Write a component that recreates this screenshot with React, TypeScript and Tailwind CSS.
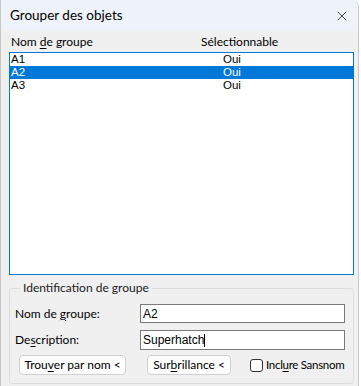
import { X } from "lucide-react";

const rows = [
  { name: "A1", sel: "Oui" },
  { name: "A2", sel: "Oui" },
  { name: "A3", sel: "Oui" },
];

const ui = "font-['Lato','Liberation_Sans',sans-serif]";
const arial = "font-['Liberation_Sans',Arial,sans-serif]";

export default function App() {
  const selected = 1;

  return (
    <div className={`w-[361px] h-[386px] bg-white ${ui} text-[12px] text-black whitespace-nowrap`}>
      <div className="w-[359px] h-full bg-[#f0f0f0] border-l border-r border-[#c8c8c8] rounded-tr-[7px] overflow-hidden">
        {/* Title bar */}
        <div className="h-[31px] flex items-center justify-between bg-[#eef3f9] pl-[9px] pr-[8px]">
          <span className="text-[13.5px] leading-none">Grouper des objets</span>
          <X size={16} strokeWidth={1.2} className="text-[#1a1a1a]" />
        </div>

        <div className="w-[345px] ml-[8px]">
          {/* Column headers */}
          <div className="h-[21px] flex items-center leading-none">
            <span className="w-[192px] pl-[2px]">
              Nom <span className="underline underline-offset-2">d</span>e groupe
            </span>
            <span>Sélectionnable</span>
          </div>

          {/* List */}
          <div className={`w-[345px] h-[223px] bg-white border border-[#0078d7] ${arial} text-[11.5px]`}>
            {rows.map((r, i) => (
              <div
                key={r.name}
                className={`h-[13px] flex items-center leading-none ${
                  i === selected ? "bg-[#0078d7] text-white" : ""
                }`}
              >
                <span className="w-[213px] pl-[1px]">{r.name}</span>
                <span>{r.sel}</span>
              </div>
            ))}
          </div>

          {/* Group box */}
          <fieldset className="mt-[7px] w-[345px] h-[102px] min-w-0 border border-[#dcdcdc] rounded-[3px] pl-[5px] pr-[8px]">
            <legend className="ml-[5px] px-[3px] leading-none text-[#1a1a1a]">
              Identification de groupe
            </legend>

            <div className="flex items-center mt-[10px] h-[19px]">
              <span className="w-[125px] shrink-0">
                Nom de <span className="underline underline-offset-2">g</span>roupe:
              </span>
              <div className={`w-[205px] h-[19px] bg-white border border-[#7a7a7a] flex items-center pl-[2px] ${arial}`}>
                A2
              </div>
            </div>

            <div className="flex items-center mt-[7px] h-[20px]">
              <span className="w-[125px] shrink-0">
                De<span className="underline underline-offset-2">s</span>cription:
              </span>
              <div className={`w-[205px] h-[20px] bg-white border border-[#7a7a7a] flex items-center pl-[2px] ${arial}`}>
                Superhatch
                <span className="w-px h-[13px] bg-black" />
              </div>
            </div>

            <div className="flex items-center mt-[5px] h-[20px] pl-[4px]">
              <button className="shrink-0 w-[107px] h-[20px] bg-[#fdfdfd] border border-[#d0d0d0] rounded-[4px] leading-none">
                Trou<span className="underline underline-offset-2">v</span>er par nom &lt;
              </button>
              <button className="shrink-0 ml-[21px] w-[84px] h-[20px] bg-[#fdfdfd] border border-[#d0d0d0] rounded-[4px] leading-none">
                Sur<span className="underline underline-offset-2">b</span>rillance &lt;
              </button>
              <label className="shrink-0 ml-[19px] flex items-center gap-[3px] leading-none">
                <span className="w-[13px] h-[13px] bg-white border border-[#333] rounded-[3px]" />
                <span className="text-[11.5px] tracking-[-0.3px]">
                  Incl<span className="underline underline-offset-2">u</span>re Sansnom
                </span>
              </label>
            </div>
          </fieldset>
        </div>
      </div>
    </div>
  );
}
